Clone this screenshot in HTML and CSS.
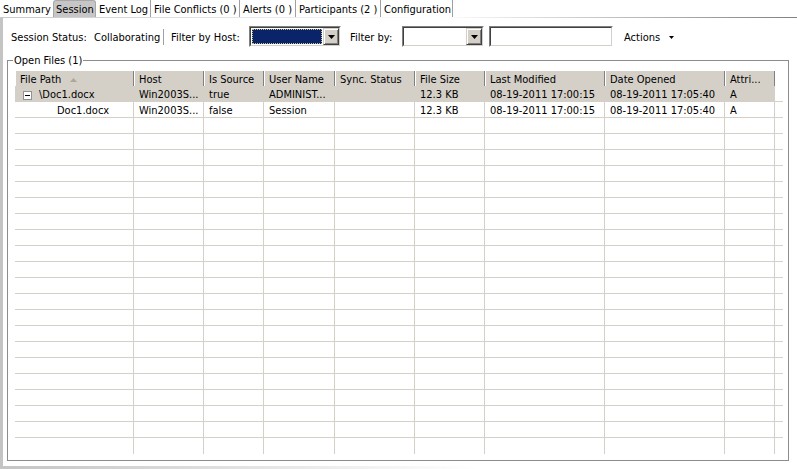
FILE: index.html
```html
<!DOCTYPE html>
<html>
<head>
<meta charset="utf-8">
<link rel="stylesheet" href="styles.css">
</head>
<body>
<div class="app">
  <div class="tabs">
    <div class="tab t-summary">Summary</div>
    <div class="tab t-session active">Session</div>
    <div class="tab t-event">Event Log</div>
    <div class="tab t-conf">File Conflicts (0 )</div>
    <div class="tab t-alerts">Alerts (0 )</div>
    <div class="tab t-part">Participants (2 )</div>
    <div class="tab t-config">Configuration</div>
    <div class="tab-fill"></div>
  </div>
  <div class="panel">
    <div class="toolbar">
      <span class="lbl w-status">Session Status:</span>
      <span class="lbl w-collab">Collaborating</span>
      <span class="vsep"></span>
      <span class="lbl w-host">Filter by Host:</span>
      <div class="combo combo-host">
        <div class="combo-in">
          <div class="combo-field focused"></div>
          <div class="combo-btn"><svg width="7" height="4" viewBox="0 0 7 4"><path d="M0 0H7L3.5 4Z" fill="#000"/></svg></div>
        </div>
      </div>
      <span class="lbl w-filter">Filter by:</span>
      <div class="combo combo-filter">
        <div class="combo-in">
          <div class="combo-field"></div>
          <div class="combo-btn"><svg width="7" height="4" viewBox="0 0 7 4"><path d="M0 0H7L3.5 4Z" fill="#000"/></svg></div>
        </div>
      </div>
      <div class="combo textbox"><div class="combo-in"></div></div>
      <span class="actions">Actions<svg width="5" height="3" viewBox="0 0 5 3"><path d="M0 0H5L2.5 3Z" fill="#000"/></svg></span>
    </div>
    <fieldset class="group">
      <legend>Open Files (1)</legend>
      <div class="grid">
        <div class="row head">
          <div class="c">File Path<svg class="sort" width="7" height="4" viewBox="0 0 7 4"><path d="M3.5 0L7 4H0Z" fill="#aca899"/></svg></div>
          <div class="c">Host</div>
          <div class="c">Is Source</div>
          <div class="c">User Name</div>
          <div class="c">Sync. Status</div>
          <div class="c">File Size</div>
          <div class="c">Last Modified</div>
          <div class="c">Date Opened</div>
          <div class="c">Attri...</div>
          <div class="c"></div>
        </div>
        <div class="row sel">
          <div class="c lvl0"><svg class="exp" width="9" height="9" viewBox="0 0 9 9"><rect x="0.5" y="0.5" width="8" height="8" fill="#fff" stroke="#919191"/><path d="M2 4.5H7" stroke="#000"/></svg>\Doc1.docx</div>
          <div class="c">Win2003S...</div>
          <div class="c">true</div>
          <div class="c">ADMINIST...</div>
          <div class="c"></div>
          <div class="c">12.3 KB</div>
          <div class="c">08-19-2011 17:00:15</div>
          <div class="c">08-19-2011 17:05:40</div>
          <div class="c">A</div>
          <div class="c"></div>
        </div>
        <div class="row">
          <div class="c lvl1">Doc1.docx</div>
          <div class="c">Win2003S...</div>
          <div class="c">false</div>
          <div class="c">Session</div>
          <div class="c"></div>
          <div class="c">12.3 KB</div>
          <div class="c">08-19-2011 17:00:15</div>
          <div class="c">08-19-2011 17:05:40</div>
          <div class="c">A</div>
          <div class="c"></div>
        </div>
        <!-- empty rows 3-12 -->
        <div class="row"><div class="c"></div><div class="c"></div><div class="c"></div><div class="c"></div><div class="c"></div><div class="c"></div><div class="c"></div><div class="c"></div><div class="c"></div><div class="c"></div></div>
        <div class="row"><div class="c"></div><div class="c"></div><div class="c"></div><div class="c"></div><div class="c"></div><div class="c"></div><div class="c"></div><div class="c"></div><div class="c"></div><div class="c"></div></div>
        <div class="row"><div class="c"></div><div class="c"></div><div class="c"></div><div class="c"></div><div class="c"></div><div class="c"></div><div class="c"></div><div class="c"></div><div class="c"></div><div class="c"></div></div>
        <div class="row"><div class="c"></div><div class="c"></div><div class="c"></div><div class="c"></div><div class="c"></div><div class="c"></div><div class="c"></div><div class="c"></div><div class="c"></div><div class="c"></div></div>
        <div class="row"><div class="c"></div><div class="c"></div><div class="c"></div><div class="c"></div><div class="c"></div><div class="c"></div><div class="c"></div><div class="c"></div><div class="c"></div><div class="c"></div></div>
        <div class="row"><div class="c"></div><div class="c"></div><div class="c"></div><div class="c"></div><div class="c"></div><div class="c"></div><div class="c"></div><div class="c"></div><div class="c"></div><div class="c"></div></div>
        <div class="row"><div class="c"></div><div class="c"></div><div class="c"></div><div class="c"></div><div class="c"></div><div class="c"></div><div class="c"></div><div class="c"></div><div class="c"></div><div class="c"></div></div>
        <div class="row"><div class="c"></div><div class="c"></div><div class="c"></div><div class="c"></div><div class="c"></div><div class="c"></div><div class="c"></div><div class="c"></div><div class="c"></div><div class="c"></div></div>
        <div class="row"><div class="c"></div><div class="c"></div><div class="c"></div><div class="c"></div><div class="c"></div><div class="c"></div><div class="c"></div><div class="c"></div><div class="c"></div><div class="c"></div></div>
        <div class="row"><div class="c"></div><div class="c"></div><div class="c"></div><div class="c"></div><div class="c"></div><div class="c"></div><div class="c"></div><div class="c"></div><div class="c"></div><div class="c"></div></div>
        <!-- empty rows 13-22 -->
        <div class="row"><div class="c"></div><div class="c"></div><div class="c"></div><div class="c"></div><div class="c"></div><div class="c"></div><div class="c"></div><div class="c"></div><div class="c"></div><div class="c"></div></div>
        <div class="row"><div class="c"></div><div class="c"></div><div class="c"></div><div class="c"></div><div class="c"></div><div class="c"></div><div class="c"></div><div class="c"></div><div class="c"></div><div class="c"></div></div>
        <div class="row"><div class="c"></div><div class="c"></div><div class="c"></div><div class="c"></div><div class="c"></div><div class="c"></div><div class="c"></div><div class="c"></div><div class="c"></div><div class="c"></div></div>
        <div class="row"><div class="c"></div><div class="c"></div><div class="c"></div><div class="c"></div><div class="c"></div><div class="c"></div><div class="c"></div><div class="c"></div><div class="c"></div><div class="c"></div></div>
        <div class="row"><div class="c"></div><div class="c"></div><div class="c"></div><div class="c"></div><div class="c"></div><div class="c"></div><div class="c"></div><div class="c"></div><div class="c"></div><div class="c"></div></div>
        <div class="row"><div class="c"></div><div class="c"></div><div class="c"></div><div class="c"></div><div class="c"></div><div class="c"></div><div class="c"></div><div class="c"></div><div class="c"></div><div class="c"></div></div>
        <div class="row"><div class="c"></div><div class="c"></div><div class="c"></div><div class="c"></div><div class="c"></div><div class="c"></div><div class="c"></div><div class="c"></div><div class="c"></div><div class="c"></div></div>
        <div class="row"><div class="c"></div><div class="c"></div><div class="c"></div><div class="c"></div><div class="c"></div><div class="c"></div><div class="c"></div><div class="c"></div><div class="c"></div><div class="c"></div></div>
        <div class="row"><div class="c"></div><div class="c"></div><div class="c"></div><div class="c"></div><div class="c"></div><div class="c"></div><div class="c"></div><div class="c"></div><div class="c"></div><div class="c"></div></div>
        <div class="row"><div class="c"></div><div class="c"></div><div class="c"></div><div class="c"></div><div class="c"></div><div class="c"></div><div class="c"></div><div class="c"></div><div class="c"></div><div class="c"></div></div>
        <!-- empty row 23 -->
        <div class="row last"><div class="c"></div><div class="c"></div><div class="c"></div><div class="c"></div><div class="c"></div><div class="c"></div><div class="c"></div><div class="c"></div><div class="c"></div><div class="c"></div></div>
      </div>
    </fieldset>
  </div>
  <div class="bottom-bar"></div>
</div>
</body>
</html>
```

FILE: styles.css
```css
* { box-sizing: border-box; }
html, body { margin: 0; padding: 0; background: #fff; }
body {
  font-family: "DejaVu Sans Condensed", "DejaVu Sans", sans-serif;
  font-stretch: condensed;
  font-size: 11px;
  color: #000;
  width: 797px;
  height: 469px;
  overflow: hidden;
}
.app { display: flex; flex-direction: column; height: 469px; }

/* tabs */
.tabs {
  display: flex;
  height: 18px;
  flex: none;
  border-bottom: 1px solid #808080;
  border-image: linear-gradient(to right, #c8c8c8 0%, #ffffff 55%, #808080 100%) 1;
}
.tab {
  height: 17px;
  line-height: 13px;
  padding: 3px 0 0 3px;
  border-right: 1px solid #a0a0a0;
  white-space: nowrap;
  flex: none;
  overflow: hidden;
}
.t-summary { width: 53px; border-right: none; }
.t-session { width: 43px; }
.t-event { width: 55px; }
.t-conf { width: 89px; }
.t-alerts { width: 56px; }
.t-part { width: 85px; }
.t-config { width: 72px; }
.tab.active {
  background: #c6c6c6;
  border: 1px solid #a8a8a8;
  border-bottom: none;
  border-radius: 3px 3px 0 0;
  padding: 2px 0 0 2px;
}
.tab-fill { flex: 1; }

/* panel */
.panel {
  flex: 1;
  display: flex;
  flex-direction: column;
  border-left: 3px solid #c4c4c4;
  padding: 0 8px 0 4px;
  min-height: 0;
}
.toolbar {
  display: flex;
  align-items: center;
  height: 21px;
  margin-top: 8px;
  padding-left: 4px;
  flex: none;
}
.lbl { white-space: nowrap; flex: none; padding-top: 1px; }
.w-status { width: 83px; }
.w-collab { width: 69px; }
.vsep { width: 1px; height: 16px; background: #a0a0a0; margin-right: 7px; flex: none; }
.w-host { width: 78px; }
.w-filter { width: 52px; }

.combo {
  flex: none;
  height: 21px;
  border: 1px solid;
  border-color: #808080 #ffffff #ffffff #808080;
  display: flex;
}
.combo-in {
  flex: 1;
  display: flex;
  border: 1px solid;
  border-color: #404040 #d4d0c8 #d4d0c8 #404040;
  background: #fff;
}
.combo-field { flex: 1; }
.combo-field.focused {
  background: #0a246a;
  margin: 1px;
  border: 1px dotted #c8c08a;
}
.combo-btn {
  width: 16px;
  flex: none;
  background: #d4d0c8;
  border: 1px solid;
  border-color: #d4d0c8 #404040 #404040 #d4d0c8;
  box-shadow: inset 1px 1px #fff, inset -1px -1px #808080;
  display: flex;
  align-items: center;
  justify-content: center;
}
.combo-btn svg { display: block; }
.combo-host { width: 92px; margin-right: 9px; }
.combo-filter { width: 82px; margin-right: 5px; }
.textbox { width: 124px; margin-right: 11px; }
.actions { display: flex; align-items: center; white-space: nowrap; padding-top: 1px; }
.actions svg { margin-left: 9px; display: block; }

/* group box */
.group {
  margin: 7px 0 0 0;
  border: 1px solid #8c8c8c;
  padding: 4px 5px 6px 7px;
  min-width: 0;
  flex: none;
}
.group legend {
  padding: 0 1px;
  margin-left: -2px;
  line-height: 13px;
  height: 13px;
  font-size: 11px;
}

/* grid */
.grid { width: 768px; height: 383px; overflow: hidden; }
.row {
  display: grid;
  grid-template-columns: 119px 70px 60px 71px 80px 70px 120px 120px 50px 8px;
  height: 16px;
}
.c {
  border-right: 1px solid #d4d0c8;
  border-bottom: 1px solid #d4d0c8;
  padding: 2px 0 0 5px;
  line-height: 13px;
  white-space: nowrap;
  overflow: hidden;
}
.c:last-child { border-right: none; }
.row.last .c { border-bottom: none; }
.row.head { height: 15px; }
.row.head .c {
  background: #d4d0c8;
  border-right: 1px solid #808080;
  border-bottom: none;
  box-shadow: inset 1px 0 #fff;
  padding-top: 2px;
  line-height: 13px;
  display: flex;
  align-items: center;
}
.row.head .c:last-child { background: #fff; box-shadow: none; border-right: none; }
.sort { margin-left: 9px; display: block; }
.row.sel .c { background: #d4d0c8; }
.row.sel .c:last-child { background: #fff; }
.lvl0 { padding-left: 8px; display: flex; align-items: flex-start; }
.exp { display: block; margin: 3px 7px 0 0; flex: none; }
.lvl1 { padding-left: 42px; }

.bottom-bar {
  height: 3px;
  flex: none;
  background: linear-gradient(to right, #c4c4c4 0%, #ffffff 60%);
}
```
